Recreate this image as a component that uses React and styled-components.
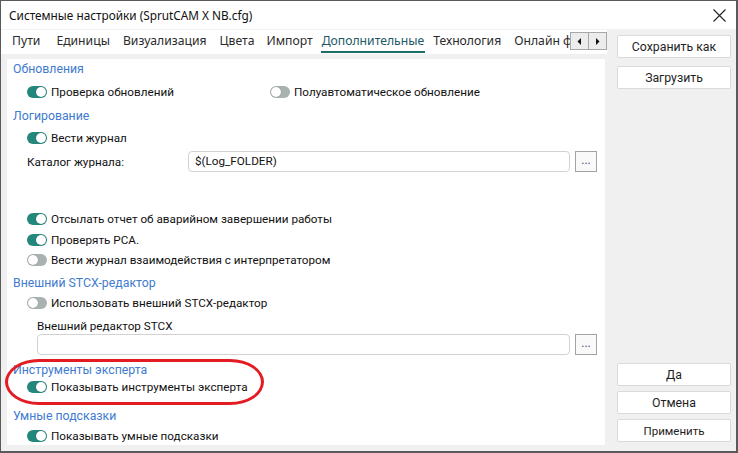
import React from 'react';
import styled, { createGlobalStyle } from 'styled-components';

const Global = createGlobalStyle`
  html, body { margin: 0; padding: 0; background: #ffffff; }
  body { font-family: Roboto, "Liberation Sans", sans-serif; }
  * { box-sizing: border-box; }
`;

const Window = styled.div`
  position: relative;
  width: 738px;
  height: 453px;
  border: 1px solid #5a5a5a;
  border-right-width: 2px;
  border-bottom-width: 2px;
  background: #f0f0f0;
  display: flex;
  flex-direction: column;
  overflow: hidden;
`;

const TitleBar = styled.div`
  height: 29px;
  flex: none;
  background: #ffffff;
  display: flex;
  align-items: center;
  justify-content: space-between;
  padding: 0 10px 0 8px;
  font-family: "Noto Sans", "Open Sans", sans-serif;
  font-size: 11.8px;
  color: #111;
  border-bottom: 1px solid #f2f2f2;
`;

const CloseIcon = styled.svg`
  width: 13px;
  height: 13px;
  display: block;
`;

const Body = styled.div`
  flex: 1;
  display: flex;
  min-height: 0;
`;

const LeftPane = styled.div`
  width: 606px;
  flex: none;
  display: flex;
  flex-direction: column;
`;

const TabStrip = styled.div`
  height: 24px;
  flex: none;
  background: #ffffff;
  display: flex;
  align-items: flex-start;
  padding: 1px 0 0 5px;
  overflow: hidden;
`;

const TabList = styled.div`
  width: 564px;
  flex: none;
  display: flex;
  overflow: hidden;
  white-space: nowrap;
`;

const Tab = styled.div`
  flex: none;
  margin: 0 ${p => p.$gap}px 0 5px;
  padding: 0 1px;
  height: 22px;
  line-height: 20px;
  font-family: "Noto Sans", "Open Sans", sans-serif;
  font-size: 12.2px;
  color: ${p => (p.$active ? '#1c5a66' : '#2b2b2b')};
  border-bottom: 2px solid ${p => (p.$active ? '#1d6e6a' : 'transparent')};
`;

const ScrollButtons = styled.div`
  display: flex;
  flex: none;
  margin-top: 1px;
`;

const ScrollBtn = styled.div`
  width: 19px;
  height: 18px;
  background: #ececec;
  border: 1px solid #a8a8a8;
  margin-left: ${p => (p.$second ? '-1px' : '0')};
  display: flex;
  align-items: center;
  justify-content: center;
`;

const Panel = styled.div`
  flex: 1;
  margin: 5px 0 6px 6px;
  width: 598px;
  background: #ffffff;
  padding-left: 6px;
  display: flex;
  flex-direction: column;
  font-size: 11.7px;
  color: #111;
`;

const SectionTitle = styled.div`
  height: 16px;
  line-height: 16px;
  margin-top: ${p => p.$mt}px;
  color: #3f7bcf;
  font-size: 12.3px;
`;

const ToggleRow = styled.div`
  height: 18px;
  margin-top: ${p => p.$mt}px;
  padding-left: 14px;
  display: flex;
  align-items: center;
`;

const ToggleItem = styled.div`
  display: flex;
  align-items: center;
  gap: 4px;
  width: ${p => (p.$w ? `${p.$w}px` : 'auto')};
  white-space: nowrap;
`;

const Switch = styled.span`
  position: relative;
  width: 20px;
  height: 12px;
  border-radius: 6px;
  flex: none;
  background: ${p => (p.$on ? '#23877c' : '#a9b2b1')};
  &::after {
    content: '';
    position: absolute;
    top: 1px;
    left: ${p => (p.$on ? '9px' : '1px')};
    width: 10px;
    height: 10px;
    border-radius: 50%;
    background: #ffffff;
    box-shadow: 0 0 1px rgba(0, 0, 0, 0.35);
  }
`;

const FieldRow = styled.div`
  height: 21px;
  margin-top: ${p => p.$mt}px;
  padding-left: ${p => p.$pl}px;
  padding-right: 8px;
  display: flex;
  align-items: center;
`;

const FieldLabel = styled.div`
  width: 161px;
  flex: none;
`;

const Input = styled.div`
  flex: 1;
  height: 21px;
  border: 1px solid #d2d2d2;
  border-radius: 4px;
  background: #fff;
  padding-left: 6px;
  line-height: 19px;
`;

const DotsButton = styled.div`
  width: 22px;
  height: 21px;
  margin-left: 5px;
  flex: none;
  border: 1px solid #a3a3a3;
  background: #f9f9f9;
  color: #4a4a8a;
  font-size: 12px;
  line-height: 17px;
  text-align: center;
`;

const PlainLabel = styled.div`
  height: 16px;
  line-height: 16px;
  margin-top: ${p => p.$mt}px;
  padding-left: 24px;
`;

const RightPane = styled.div`
  flex: 1;
  display: flex;
  flex-direction: column;
  padding: 5px 6px 9px 10px;
`;

const Button = styled.div`
  height: 23px;
  width: 114px;
  flex: none;
  margin-top: ${p => p.$mt}px;
  background: #ffffff;
  border: 1px solid #dadada;
  border-radius: 2px;
  display: flex;
  align-items: center;
  justify-content: center;
  font-size: ${p => (p.$small ? 11.5 : 12.3)}px;
  color: #1e1e1e;
`;

const Spacer = styled.div`
  flex: 1;
`;

const Highlight = styled.div`
  position: absolute;
  left: 4px;
  top: 358px;
  width: 259px;
  height: 46px;
  border: 3px solid #e31b23;
  border-radius: 34px / 23px;
  pointer-events: none;
`;

const Arrow = ({ dir }) => (
  <svg width="5" height="7" viewBox="0 0 5 7">
    {dir === 'left' ? <polygon points="4,0 4,7 0.5,3.5" fill="#111" /> : <polygon points="1,0 1,7 4.5,3.5" fill="#111" />}
  </svg>
);

const Toggle = ({ on, label, w }) => (
  <ToggleItem $w={w}>
    <Switch $on={on} />
    <span>{label}</span>
  </ToggleItem>
);

const tabs = [
  ['Пути', 9],
  ['Единицы', 6],
  ['Визуализация', 6],
  ['Цвета', 5],
  ['Импорт', 2],
  ['Дополнительные', 2],
  ['Технология', 6],
  ['Онлайн функции', 5],
];

export default function App() {
  return (
    <>
      <Global />
      <Window>
        <TitleBar>
          <span>Системные настройки (SprutCAM X NB.cfg)</span>
          <CloseIcon viewBox="0 0 13 13">
            <path d="M0.5 0.5 L12.5 12.5 M12.5 0.5 L0.5 12.5" stroke="#222" strokeWidth="1.1" fill="none" />
          </CloseIcon>
        </TitleBar>
        <Body>
          <LeftPane>
            <TabStrip>
              <TabList>
                {tabs.map(([t, g]) => (
                  <Tab key={t} $gap={g} $active={t === 'Дополнительные'}>{t}</Tab>
                ))}
              </TabList>
              <ScrollButtons>
                <ScrollBtn><Arrow dir="left" /></ScrollBtn>
                <ScrollBtn $second><Arrow dir="right" /></ScrollBtn>
              </ScrollButtons>
            </TabStrip>
            <Panel>
              <SectionTitle $mt={2}>Обновления</SectionTitle>
              <ToggleRow $mt={6}>
                <Toggle on label="Проверка обновлений" w={243} />
                <Toggle label="Полуавтоматическое обновление" />
              </ToggleRow>
              <SectionTitle $mt={7}>Логирование</SectionTitle>
              <ToggleRow $mt={5}>
                <Toggle on label="Вести журнал" />
              </ToggleRow>
              <FieldRow $mt={4} $pl={14}>
                <FieldLabel>Каталог журнала:</FieldLabel>
                <Input>$(Log_FOLDER)</Input>
                <DotsButton>...</DotsButton>
              </FieldRow>
              <ToggleRow $mt={38}>
                <Toggle on label="Отсылать отчет об аварийном завершении работы" />
              </ToggleRow>
              <ToggleRow $mt={3}>
                <Toggle on label="Проверять РСА." />
              </ToggleRow>
              <ToggleRow $mt={2}>
                <Toggle label="Вести журнал взаимодействия с интерпретатором" />
              </ToggleRow>
              <SectionTitle $mt={6}>Внешний STCX-редактор</SectionTitle>
              <ToggleRow $mt={3}>
                <Toggle label="Использовать внешний STCX-редактор" />
              </ToggleRow>
              <PlainLabel $mt={6}>Внешний редактор STCX</PlainLabel>
              <FieldRow $mt={0} $pl={24}>
                <Input />
                <DotsButton>...</DotsButton>
              </FieldRow>
              <SectionTitle $mt={7}>Инструменты эксперта</SectionTitle>
              <ToggleRow $mt={0}>
                <Toggle on label="Показывать инструменты эксперта" />
              </ToggleRow>
              <SectionTitle $mt={12}>Умные подсказки</SectionTitle>
              <ToggleRow $mt={3}>
                <Toggle on label="Показывать умные подсказки" />
              </ToggleRow>
            </Panel>
          </LeftPane>
          <RightPane>
            <Button $mt={0}>Сохранить как</Button>
            <Button $mt={8}>Загрузить</Button>
            <Spacer />
            <Button $mt={0}>Да</Button>
            <Button $mt={5}>Отмена</Button>
            <Button $mt={5} $small>Применить</Button>
          </RightPane>
        </Body>
        <Highlight />
      </Window>
    </>
  );
}
